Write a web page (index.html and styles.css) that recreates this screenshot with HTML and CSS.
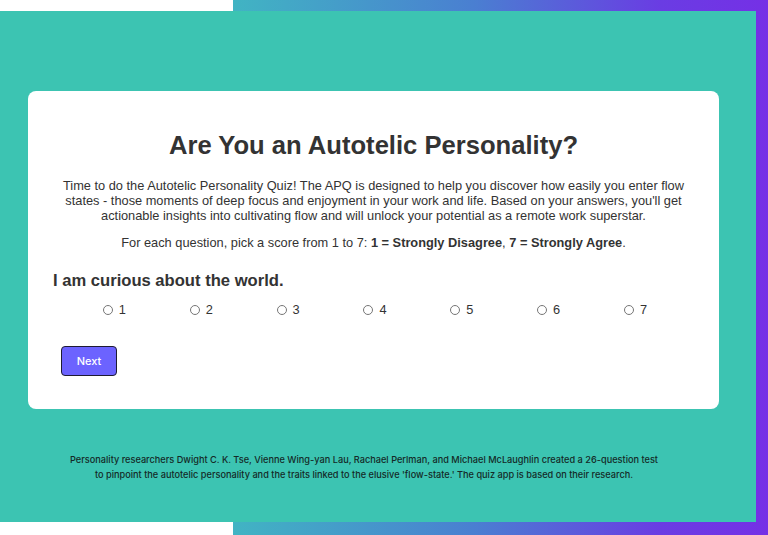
FILE: index.html
```html
<!DOCTYPE html>
<html lang="en">
<head>
  <meta charset="UTF-8" />
  <meta name="viewport" content="width=device-width, initial-scale=1.0"/>
  <title>Autotelic Personality Quiz</title>
  <link rel="stylesheet" href="styles.css">
</head>
<body>
  <div class="frame">
    <div class="stage">
      <div class="quiz-card">
        <h1>Are You an Autotelic Personality?</h1>
        <p class="intro">Time to do the Autotelic Personality Quiz! The APQ is designed to help you discover how easily you enter flow states - those moments of deep focus and enjoyment in your work and life. Based on your answers, you'll get actionable insights into cultivating flow and will unlock your potential as a remote work superstar.</p>
        <p class="hint">For each question, pick a score from 1 to 7: <strong>1 = Strongly Disagree</strong>, <strong>7 = Strongly Agree</strong>.</p>

        <h2 class="question">I am curious about the world.</h2>
        <div class="options">
          <label><input type="radio" name="q1" value="1"> 1</label>
          <label><input type="radio" name="q1" value="2"> 2</label>
          <label><input type="radio" name="q1" value="3"> 3</label>
          <label><input type="radio" name="q1" value="4"> 4</label>
          <label><input type="radio" name="q1" value="5"> 5</label>
          <label><input type="radio" name="q1" value="6"> 6</label>
          <label><input type="radio" name="q1" value="7"> 7</label>
        </div>

        <button id="btnNext">Next</button>
      </div>

      <p class="credits">Personality researchers Dwight C. K. Tse, Vienne Wing-yan Lau, Rachael Perlman, and Michael McLaughlin created a 26-question test<br>to pinpoint the autotelic personality and the traits linked to the elusive 'flow-state.' The quiz app is based on their research.</p>
    </div>
  </div>
</body>
</html>
```

FILE: styles.css
```css
:root {
  --teal: #3cc4b2;
  --button-color: #6c63ff;
  --text-color: #333333;
  --card-color: #ffffff;
}

body {
  margin: 0;
  padding: 0;
  background-color: #ffffff;
  font-family: 'Liberation Sans', Arial, sans-serif;
  color: var(--text-color);
}

/* gradient band peeking out behind the teal panel */
.frame {
  height: 535px;
  box-sizing: border-box;
  padding: 11px 12px 13px 0;
  background: #ffffff linear-gradient(90deg, #41b4c3 0%, #4a7fd1 45%, #6a3ce3 80%, #7530e6 100%) no-repeat right top / 535px 100%;
}

.stage {
  height: 100%;
  background-color: var(--teal);
  padding-top: 80px;
  box-sizing: border-box;
}

.quiz-card {
  margin: 0 37px 0 28px;
  padding: 40px 25px 33px;
  background-color: var(--card-color);
  border-radius: 8px;
}

.quiz-card h1 {
  margin: 0;
  font-size: 25.6px;
  text-align: center;
  color: var(--text-color);
}

.intro {
  margin: 18px 0 0;
  font-size: 12.8px;
  text-align: center;
}

.hint {
  margin: 12px 0 0;
  font-size: 12.8px;
  text-align: center;
}

.question {
  margin: 21px 0 0;
  font-size: 16.6px;
  font-weight: bold;
}

.options {
  display: flex;
  justify-content: space-around;
  margin: 11px 15px 0 18px;
  font-size: 12.8px;
}

.options label {
  display: flex;
  align-items: center;
  gap: 6px;
  cursor: pointer;
}

.options input[type="radio"] {
  appearance: none;
  -webkit-appearance: none;
  margin: 0;
  width: 10px;
  height: 10px;
  border: 1px solid #767676;
  border-radius: 50%;
  background-color: #fff;
}

.options input[type="radio"]:checked {
  background: radial-gradient(circle, #333 0 3px, #fff 3.5px);
}

#btnNext {
  display: block;
  margin: 29px 0 0 8px;
  width: 56px;
  height: 30px;
  padding: 0;
  font-family: 'Inter', 'Liberation Sans', sans-serif;
  font-size: 11px;
  font-weight: 500;
  color: #fff;
  background-color: var(--button-color);
  border: 1.5px solid #1e1b33;
  border-radius: 4px;
  cursor: pointer;
}

#btnNext:hover {
  background-color: #5a52e0;
}

.credits {
  margin: 43px 40px 0 40px;
  padding-right: 28px;
  font-family: 'Inter', 'Open Sans', sans-serif;
  font-size: 9.2px;
  font-weight: 500;
  line-height: 15px;
  text-align: center;
  color: #142a27;
}
```
